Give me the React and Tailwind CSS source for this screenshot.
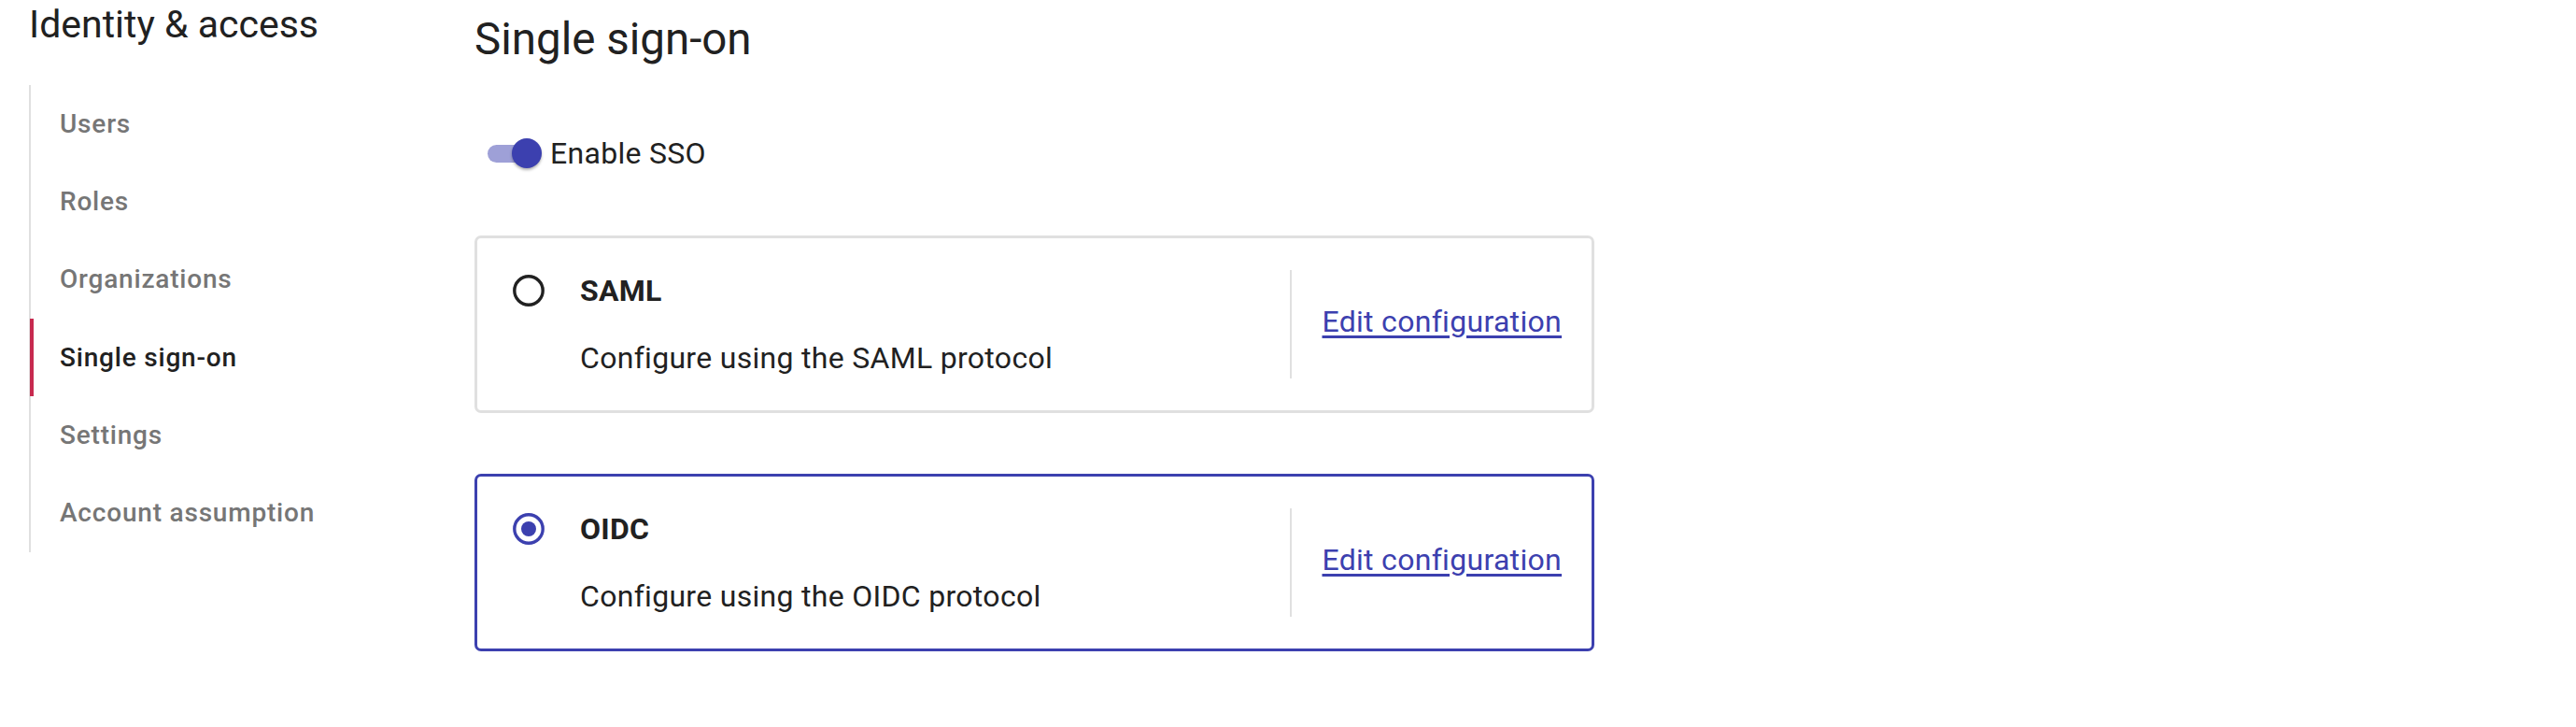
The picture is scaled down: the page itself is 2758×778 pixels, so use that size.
import React, { useState } from 'react';

const navItems = ['Users', 'Roles', 'Organizations', 'Single sign-on', 'Settings', 'Account assumption'];

const Radio = ({ checked }) => (
  <svg width="34" height="34" viewBox="0 0 34 34" className="shrink-0">
    <circle cx="17" cy="17" r="15.2" fill="none" stroke={checked ? '#3c40af' : '#212121'} strokeWidth="3.4" />
    {checked && <circle cx="17" cy="17" r="8" fill="#3c40af" />}
  </svg>
);

const ProviderCard = ({ name, selected, onSelect }) => (
  <div
    onClick={onSelect}
    className={`flex items-center h-[190px] rounded-[7px] border-[3px] pl-[38px] pr-[32px] cursor-pointer ${
      selected ? 'border-[#3c40af]' : 'border-[#e0e0e0]'
    }`}
  >
    <div className="flex-1 flex flex-col">
      <div className="flex items-center h-[34px] gap-[38px]">
        <Radio checked={selected} />
        <span className="text-[32px] font-bold tracking-[0.3px] text-[#212121]">{name}</span>
      </div>
      <div className="mt-[38px] pl-[72px] text-[32px] leading-[34px] tracking-[0.3px] text-[#212121]">
        Configure using the {name} protocol
      </div>
    </div>
    <div className="w-[2px] h-[116px] bg-[#e0e0e0]" />
    <a href="#" className="ml-[32px] mb-[7px] text-[32px] tracking-[0.3px] text-[#3c40af] underline underline-offset-[4px]">
      Edit configuration
    </a>
  </div>
);

export default function App() {
  const [enabled, setEnabled] = useState(true);
  const [provider, setProvider] = useState('OIDC');

  return (
    <div className="min-h-screen bg-white flex pl-[31px] font-['Roboto',_'Liberation_Sans',_sans-serif]">
      <aside className="w-[477px] shrink-0">
        <div className="h-[54px] flex items-center">
          <h1 className="text-[41px] text-[#212121]">Identity &amp; access</h1>
        </div>
        <nav className="mt-[37px] border-l-2 border-[#e0e0e0]">
          {navItems.map((item) => {
            const active = item === 'Single sign-on';
            return (
              <div
                key={item}
                className={`-ml-[1px] h-[83.33px] flex items-center pl-[28px] border-l-4 text-[28px] font-medium tracking-[0.8px] ${
                  active ? 'border-[#c72a4f] text-[#212121]' : 'border-transparent text-[#767676]'
                }`}
              >
                {item}
              </div>
            );
          })}
        </nav>
      </aside>

      <main className="w-[1199px]">
        <div className="h-[86px] flex items-center">
          <h2 className="text-[47.5px] text-[#212121]">Single sign-on</h2>
        </div>

        <div className="mt-[50px] h-[56px] flex items-center pl-[14px]">
          <button onClick={() => setEnabled(!enabled)} className="relative w-[58px] h-[32px] flex items-center">
            <span className={`w-[56px] h-[19px] rounded-full ${enabled ? 'bg-[#9ea0d7]' : 'bg-[#bdbdbd]'}`} />
            <span
              className={`absolute top-0 w-[32px] h-[32px] rounded-full shadow-[0_2px_3px_rgba(0,0,0,0.3)] ${
                enabled ? 'right-0 bg-[#3c40af]' : 'left-0 bg-[#fafafa]'
              }`}
            />
          </button>
          <span className="ml-[9px] text-[32px] tracking-[0.3px] text-[#212121]">Enable SSO</span>
        </div>

        <div className="mt-[60px]">
          <ProviderCard name="SAML" selected={provider === 'SAML'} onSelect={() => setProvider('SAML')} />
        </div>
        <div className="mt-[65px]">
          <ProviderCard name="OIDC" selected={provider === 'OIDC'} onSelect={() => setProvider('OIDC')} />
        </div>
      </main>
    </div>
  );
}
